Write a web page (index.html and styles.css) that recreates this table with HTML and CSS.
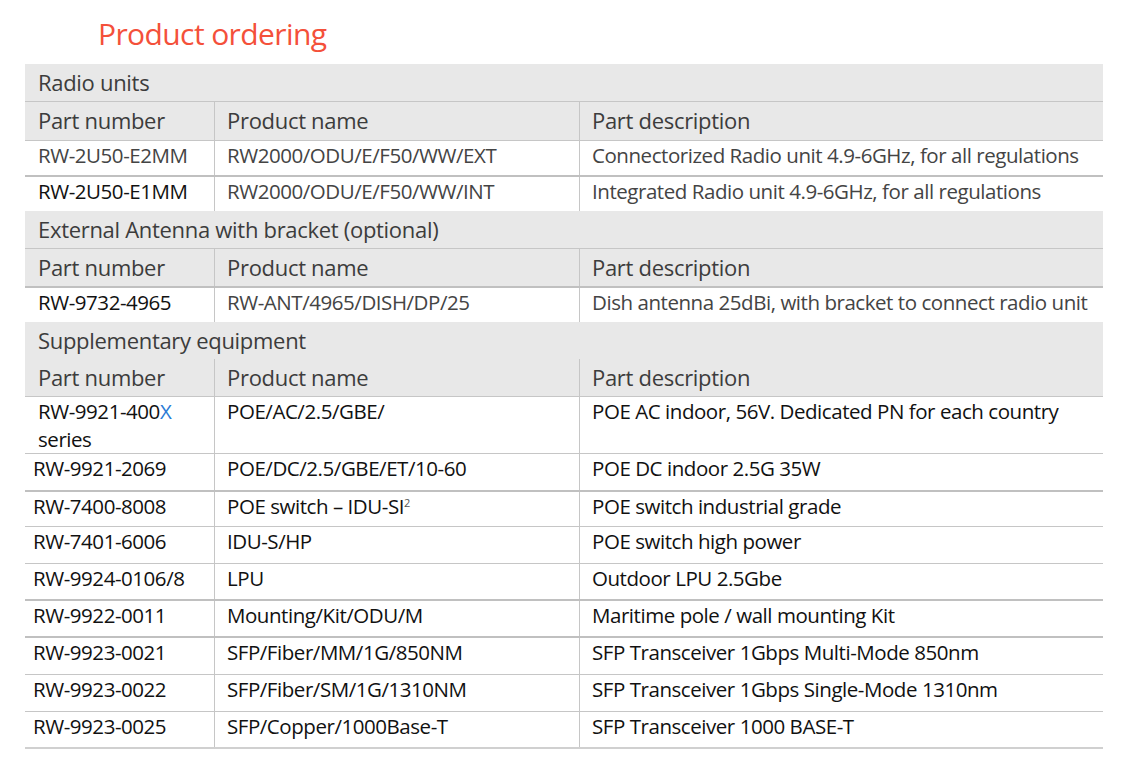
FILE: index.html
```html
<!DOCTYPE html>
<html lang="en">
<head>
<meta charset="utf-8">
<title>Product ordering</title>
<link rel="stylesheet" href="styles.css">
</head>
<body>
<div class="page">
  <h1 class="title">Product ordering</h1>
  <div class="table">
    <div class="section">Radio units</div>
    <div class="row head h38 line-top">
      <div class="cell c1">Part number</div>
      <div class="cell c2">Product name</div>
      <div class="cell c3">Part description</div>
    </div>
    <div class="row data h34 line-top">
      <div class="cell c1 muted wide">RW-2U50-E2MM</div>
      <div class="cell c2 muted">RW2000/ODU/E/F50/WW/EXT</div>
      <div class="cell c3 muted">Connectorized Radio unit 4.9-6GHz, for all regulations</div>
    </div>
    <div class="row data h34 line-top thick">
      <div class="cell c1 dark wide">RW-2U50-E1MM</div>
      <div class="cell c2 muted">RW2000/ODU/E/F50/WW/INT</div>
      <div class="cell c3 muted">Integrated Radio unit 4.9-6GHz, for all regulations</div>
    </div>

    <div class="section">External Antenna with bracket (optional)</div>
    <div class="row head h37 line-top">
      <div class="cell c1">Part number</div>
      <div class="cell c2">Product name</div>
      <div class="cell c3">Part description</div>
    </div>
    <div class="row data h34 line-top thick">
      <div class="cell c1 dark wide">RW-9732-4965</div>
      <div class="cell c2 muted">RW-ANT/4965/DISH/DP/25</div>
      <div class="cell c3 muted">Dish antenna 25dBi, with bracket to connect radio unit</div>
    </div>

    <div class="section">Supplementary equipment</div>
    <div class="row head h37">
      <div class="cell c1">Part number</div>
      <div class="cell c2">Product name</div>
      <div class="cell c3">Part description</div>
    </div>
    <div class="row data tall line-top">
      <div class="cell c1 dark wide">RW-9921-400<span class="blue">X</span><br>series</div>
      <div class="cell c2 dark">POE/AC/2.5/GBE/</div>
      <div class="cell c3 dark">POE AC indoor, 56V. Dedicated PN for each country</div>
    </div>
    <div class="row data h36 line-top">
      <div class="cell c1 dark">RW-9921-2069</div>
      <div class="cell c2 dark">POE/DC/2.5/GBE/ET/10-60</div>
      <div class="cell c3 dark">POE DC indoor 2.5G 35W</div>
    </div>
    <div class="row data h34 line-top thick">
      <div class="cell c1 dark">RW-7400-8008</div>
      <div class="cell c2 dark">POE switch – IDU-SI<sup class="sup">2</sup></div>
      <div class="cell c3 dark">POE switch industrial grade</div>
    </div>
    <div class="row data h36 line-top">
      <div class="cell c1 dark">RW-7401-6006</div>
      <div class="cell c2 dark">IDU-S/HP</div>
      <div class="cell c3 dark">POE switch high power</div>
    </div>
    <div class="row data h35 line-top">
      <div class="cell c1 dark">RW-9924-0106/8</div>
      <div class="cell c2 dark">LPU</div>
      <div class="cell c3 dark">Outdoor LPU 2.5Gbe</div>
    </div>
    <div class="row data h35 line-top thick">
      <div class="cell c1 dark">RW-9922-0011</div>
      <div class="cell c2 dark">Mounting/Kit/ODU/M</div>
      <div class="cell c3 dark">Maritime pole / wall mounting Kit</div>
    </div>
    <div class="row data h36 line-top thick">
      <div class="cell c1 dark">RW-9923-0021</div>
      <div class="cell c2 dark">SFP/Fiber/MM/1G/850NM</div>
      <div class="cell c3 dark">SFP Transceiver 1Gbps Multi-Mode 850nm</div>
    </div>
    <div class="row data h36 line-top">
      <div class="cell c1 dark">RW-9923-0022</div>
      <div class="cell c2 dark">SFP/Fiber/SM/1G/1310NM</div>
      <div class="cell c3 dark">SFP Transceiver 1Gbps Single-Mode 1310nm</div>
    </div>
    <div class="row data h35 line-top last">
      <div class="cell c1 dark">RW-9923-0025</div>
      <div class="cell c2 dark">SFP/Copper/1000Base-T</div>
      <div class="cell c3 dark">SFP Transceiver 1000 BASE-T</div>
    </div>
  </div>
</div>
</body>
</html>
```

FILE: styles.css
```css
html, body {
  margin: 0;
  padding: 0;
  background: #ffffff;
}

body {
  font-family: "Open Sans", "Noto Sans", "Liberation Sans", sans-serif;
  color: #3a3a3a;
}

.page {
  padding: 0 25px;
  width: 1078px;
}

.title {
  margin: 0;
  padding: 14px 0 0 73px;
  height: 64px;
  box-sizing: border-box;
  font-size: 30px;
  font-weight: 400;
  letter-spacing: -0.6px;
  line-height: 40px;
  color: #f4503a;
}

.table {
  width: 1078px;
  font-size: 20.5px;
  letter-spacing: -0.45px;
}

.section {
  background: #e8e8e8;
  height: 37px;
  line-height: 37px;
  padding-left: 13px;
  color: #3c3c3c;
  font-size: 22px;
  letter-spacing: -0.3px;
}

.row {
  display: grid;
  grid-template-columns: 189px 365px 524px;
}

.row.line-top {
  border-top: 1px solid #c6c6c6;
}

.row.thick {
  border-top: 2px solid #c0c0c0;
}

.row.last {
  border-bottom: 2px solid #d0d0d0;
}

.head {
  background: #e8e8e8;
  color: #3c3c3c;
  font-size: 22px;
  letter-spacing: -0.3px;
}

.h34 { height: 34px; }
.h35 { height: 35px; }
.h36 { height: 36px; }
.h37 { height: 37px; }
.h38 { height: 38px; }

.head .cell {
  line-height: 37px;
}

.data .cell {
  line-height: 29px;
}

.data.tall {
  height: 56px;
}

.data.tall .cell {
  line-height: 28px;
}

.cell {
  padding-left: 13px;
  white-space: nowrap;
}

.c2, .c3 {
  border-left: 1px solid #c6c6c6;
  padding-left: 12px;
}

.data .c1 {
  padding-left: 8px;
}

.data .c1.wide {
  padding-left: 13px;
}

.muted {
  color: #444444;
}

.dark {
  color: #111111;
}

.blue {
  color: #2b7bd6;
}

.sup {
  font-size: 11px;
  color: #555555;
  vertical-align: top;
  line-height: 20px;
  position: relative;
  top: 1px;
}
```
